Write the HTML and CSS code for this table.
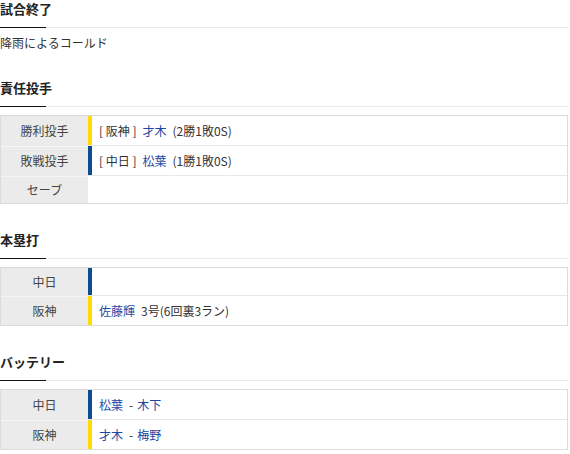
FILE: index.html
```html
<!DOCTYPE html>
<html lang="ja">
<head>
<meta charset="utf-8">
<link rel="stylesheet" href="styles.css">
</head>
<body>
<div class="page">
  <section class="sec">
    <h2 class="head">試合終了</h2>
    <p class="note">降雨によるコールド</p>
  </section>

  <section class="sec">
    <h2 class="head">責任投手</h2>
    <div class="tbl">
      <div class="row">
        <div class="lbl">勝利投手</div>
        <div class="val bar-y">[ 阪神 ]<a class="lnk gap">才木</a><span class="gap">(2勝1敗0S)</span></div>
      </div>
      <div class="row">
        <div class="lbl">敗戦投手</div>
        <div class="val bar-b">[ 中日 ]<a class="lnk gap">松葉</a><span class="gap">(1勝1敗0S)</span></div>
      </div>
      <div class="row short">
        <div class="lbl">セーブ</div>
        <div class="val"></div>
      </div>
    </div>
  </section>

  <section class="sec">
    <h2 class="head">本塁打</h2>
    <div class="tbl">
      <div class="row mid">
        <div class="lbl">中日</div>
        <div class="val bar-b"></div>
      </div>
      <div class="row">
        <div class="lbl">阪神</div>
        <div class="val bar-y"><a class="lnk">佐藤輝</a><span class="gap">3号(6回裏3ラン)</span></div>
      </div>
    </div>
  </section>

  <section class="sec">
    <h2 class="head">バッテリー</h2>
    <div class="tbl">
      <div class="row">
        <div class="lbl">中日</div>
        <div class="val bar-b"><a class="lnk">松葉</a><span class="gap">-</span><a class="lnk sp">木下</a></div>
      </div>
      <div class="row">
        <div class="lbl">阪神</div>
        <div class="val bar-y"><a class="lnk">才木</a><span class="gap">-</span><a class="lnk sp">梅野</a></div>
      </div>
    </div>
  </section>
</div>
</body>
</html>
```

FILE: styles.css
```css
* { box-sizing: border-box; }
html, body { margin: 0; padding: 0; background: #fff; }
body {
  font-family: "Noto Sans CJK JP", "Noto Sans", sans-serif;
  color: #333;
  font-size: 12px;
}
.page { width: 568px; }
.sec { margin-bottom: 27px; }
.sec:last-child { margin-bottom: 0; }
.head {
  position: relative;
  margin: 0;
  font-size: 13px;
  font-weight: bold;
  line-height: 18px;
  height: 28px;
  padding-bottom: 9px;
  border-bottom: 1px solid #ebebeb;
  color: #222;
}
.head::after {
  content: "";
  position: absolute;
  left: 0;
  bottom: -1px;
  width: 46px;
  height: 1px;
  background: #111;
}
.note {
  margin: 6px 0 0;
  line-height: 18px;
  font-size: 12px;
  color: #333;
}
.tbl {
  margin-top: 8px;
  border: 1px solid #dcdcdc;
}
.row {
  display: flex;
  height: 30px;
  border-bottom: 1px solid #e8e8e8;
}
.row:last-child { border-bottom: none; height: 29px; }
.row.short { height: 27px; }
.row.mid { height: 28px; }
.lbl {
  width: 87px;
  flex: none;
  background: #ebebeb;
  display: flex;
  align-items: center;
  justify-content: center;
  color: #444;
  font-size: 12px;
}
.row + .row .lbl { box-shadow: inset 0 1px 0 #f6f6f6; }
.val {
  flex: 1;
  display: flex;
  align-items: center;
  padding-left: 11px;
  color: #333;
  font-size: 12px;
  white-space: pre;
}
.bar-y { border-left: 4px solid #ffdb00; padding-left: 7px; }
.bar-b { border-left: 4px solid #0e4c92; padding-left: 7px; }
.lnk { color: #1d47a6; text-decoration: none; }
.gap { margin-left: 6px; }
.sp { margin-left: 4px; }
```
